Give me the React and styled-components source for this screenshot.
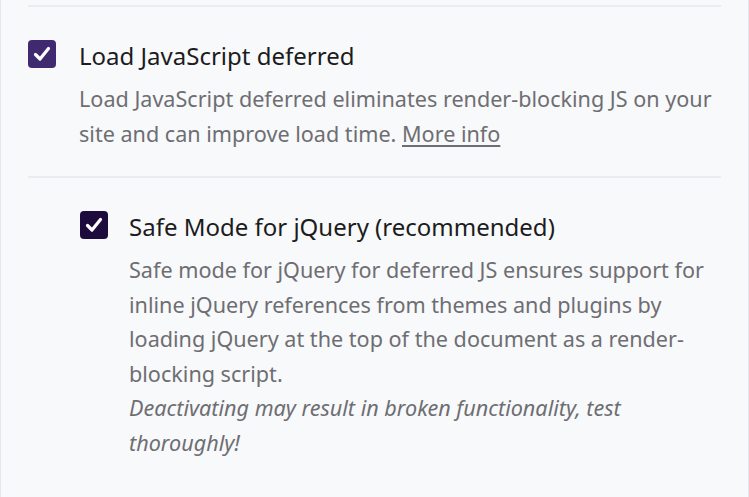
import styled, { createGlobalStyle } from "styled-components"

const GlobalStyle = createGlobalStyle`
    html, body {
        margin: 0;
        padding: 0;
        background: #f8f9fb;
    }
    body {
        font-family: "Noto Sans", "Open Sans", sans-serif;
    }
`

const Panel = styled.div`
    box-sizing: border-box;
    width: 749px;
    height: 497px;
    background: #f8f9fb;
    border-left: 1px solid #e6e7ec;
    border-right: 1px solid #e6e7ec;
    padding: 5px 27px 0 27px;
`

const Divider = styled.div`
    height: 2px;
    background: #ebecf0;
`

const Option = styled.div`
    display: flex;
    align-items: flex-start;
    gap: ${(p) => p.gap || 23}px;
    padding: 32px 0 ${(p) => p.bottom || 0}px ${(p) => p.indent || 0}px;
`

const Box = styled.span`
    flex: none;
    display: flex;
    align-items: center;
    justify-content: center;
    width: 28px;
    height: 28px;
    margin-top: 1px;
    border-radius: 4px;
    background: ${(p) => p.color};
`

const Content = styled.div`
    flex: 1;
    min-width: 0;
`

const Title = styled.div`
    font-size: 24px;
    line-height: 34px;
    color: #1c1c20;
`

const Desc = styled.p`
    margin: 9px 0 0;
    font-size: 21.6px;
    line-height: 34.5px;
    color: #6e6e72;
    em {
        font-style: italic;
    }
    a {
        color: #6e6e72;
        text-decoration: underline;
        text-underline-offset: 3px;
    }
`

function Check({ color }) {
    return (
        <Box color={color}>
            <svg width="18" height="16" viewBox="0 0 18 16" fill="none">
                <path d="M2.5 8.5 L7 13 L15.5 2.5" stroke="#fff" strokeWidth="3.2" strokeLinecap="round" strokeLinejoin="round" />
            </svg>
        </Box>
    )
}

export default function App() {
    return (
        <>
            <GlobalStyle />
            <Panel>
                <Divider />
                <Option bottom={25}>
                    <Check color="#3f2a70" />
                    <Content>
                        <Title>Load JavaScript deferred</Title>
                        <Desc>
                            Load JavaScript deferred eliminates render-blocking JS on your site and can improve load time. <a href="#">More info</a>
                        </Desc>
                    </Content>
                </Option>
                <Divider />
                <Option indent={52} gap={21}>
                    <Check color="#1e0b3e" />
                    <Content>
                        <Title>Safe Mode for jQuery (recommended)</Title>
                        <Desc>
                            Safe mode for jQuery for deferred JS ensures support for inline jQuery references from themes and plugins by loading jQuery at the top of the document as a render-blocking script.
                            <br />
                            <em>Deactivating may result in broken functionality, test thoroughly!</em>
                        </Desc>
                    </Content>
                </Option>
            </Panel>
        </>
    )
}
